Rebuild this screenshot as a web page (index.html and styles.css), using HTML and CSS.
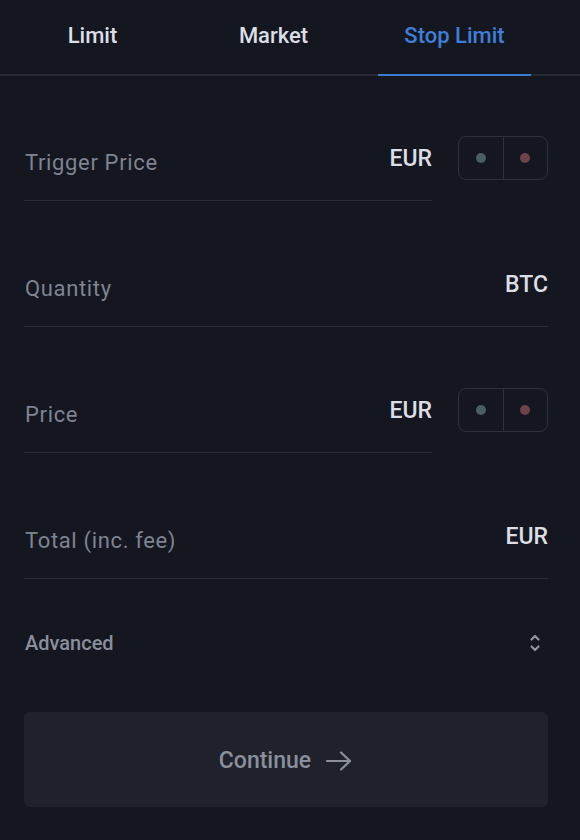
FILE: index.html
```html
<!DOCTYPE html>
<html lang="en">
<head>
<meta charset="utf-8">
<title>Stop Limit</title>
<link rel="stylesheet" href="styles.css">
</head>
<body>
<div class="panel">
  <nav class="tabs">
    <div class="tab"><span class="tab-label">Limit</span></div>
    <div class="tab"><span class="tab-label">Market</span></div>
    <div class="tab tab-active"><span class="tab-label">Stop Limit</span></div>
  </nav>
  <form class="form">
    <div class="row">
      <div class="field">
        <span class="label">Trigger Price</span>
        <span class="unit">EUR</span>
      </div>
      <div class="toggle">
        <span class="toggle-half"><span class="dot dot-green"></span></span>
        <span class="toggle-half"><span class="dot dot-red"></span></span>
      </div>
    </div>
    <div class="row">
      <div class="field">
        <span class="label">Quantity</span>
        <span class="unit">BTC</span>
      </div>
    </div>
    <div class="row">
      <div class="field">
        <span class="label">Price</span>
        <span class="unit">EUR</span>
      </div>
      <div class="toggle">
        <span class="toggle-half"><span class="dot dot-green"></span></span>
        <span class="toggle-half"><span class="dot dot-red"></span></span>
      </div>
    </div>
    <div class="row">
      <div class="field">
        <span class="label">Total (inc. fee)</span>
        <span class="unit">EUR</span>
      </div>
    </div>
    <div class="advanced">
      <span class="advanced-label">Advanced</span>
      <svg class="updown" width="14" height="24" viewBox="0 0 14 24" fill="none" stroke="currentColor" stroke-width="2.2" stroke-linecap="round" stroke-linejoin="round">
        <path d="M3.5 8.5 L7 5 L10.5 8.5"/>
        <path d="M3.5 15.5 L7 19 L10.5 15.5"/>
      </svg>
    </div>
    <button type="button" class="continue">
      <span>Continue</span>
      <svg class="arrow" width="28" height="22" viewBox="0 0 28 22" fill="none" stroke="currentColor" stroke-width="2.2" stroke-linecap="round" stroke-linejoin="round">
        <path d="M2 11 H25"/>
        <path d="M16 2.5 L25 11 L16 19.5"/>
      </svg>
    </button>
  </form>
</div>
</body>
</html>
```

FILE: styles.css
```css
* { box-sizing: border-box; }
html, body {
  margin: 0;
  padding: 0;
  background: #141620;
}
body {
  font-family: Roboto, "Liberation Sans", sans-serif;
  color: #e2e4ea;
  width: 580px;
  height: 840px;
  overflow: hidden;
}
.tabs {
  display: flex;
  height: 76px;
  border-bottom: 2px solid #272a33;
}
.tab {
  flex: 0 0 181px;
  display: flex;
  justify-content: center;
  align-items: center;
  padding: 0 0 3px 4px;
  font-size: 22px;
  font-weight: 500;
  color: #dcdee5;
  position: relative;
}
.tab-active {
  color: #3f7fd6;
}
.tab-active::after {
  content: "";
  position: absolute;
  left: 16px;
  right: 12px;
  bottom: -2px;
  height: 2px;
  background: #3b7bd2;
}
.form {
  display: flex;
  flex-direction: column;
  padding: 60px 32px 0 24px;
  margin: 0;
}
.row {
  display: flex;
  align-items: flex-start;
  gap: 26px;
  margin-bottom: 61px;
}
.field {
  flex: 1;
  display: flex;
  align-items: center;
  justify-content: space-between;
  height: 65px;
  padding: 1px 0 21px 1px;
  border-bottom: 1px solid #2b2e38;
}
.label {
  font-size: 22px;
  letter-spacing: 0.65px;
  color: #7e8491;
  margin-top: 8px;
}
.unit {
  font-size: 23px;
  font-weight: 500;
  color: #dcdee4;
}
.toggle {
  flex: 0 0 90px;
  height: 44px;
  display: flex;
  border: 1px solid #2e313b;
  border-radius: 8px;
}
.toggle-half {
  flex: 1;
  display: flex;
  align-items: center;
  justify-content: center;
}
.toggle-half + .toggle-half {
  border-left: 1.5px solid #2e313b;
}
.dot {
  width: 10px;
  height: 10px;
  border-radius: 50%;
}
.dot-green { background: #4b5e60; }
.dot-red { background: #6b4349; }
.advanced {
  display: flex;
  align-items: center;
  justify-content: space-between;
  height: 24px;
  margin-top: -9px;
  padding-left: 1px;
  color: #8a8f9c;
}
.advanced-label {
  font-size: 20px;
  font-weight: 500;
}
.updown {
  margin-right: 6px;
  color: #8f94a0;
}
.continue {
  margin-top: 57px;
  height: 95px;
  border: none;
  border-radius: 6px;
  background: #1f212b;
  color: #8a909c;
  font-family: Roboto, "Liberation Sans", sans-serif;
  font-size: 23px;
  font-weight: 500;
  display: flex;
  align-items: center;
  justify-content: center;
  gap: 14px;
  padding: 1px 0 0 0;
}
.arrow {
  margin-top: 2px;
}
```
